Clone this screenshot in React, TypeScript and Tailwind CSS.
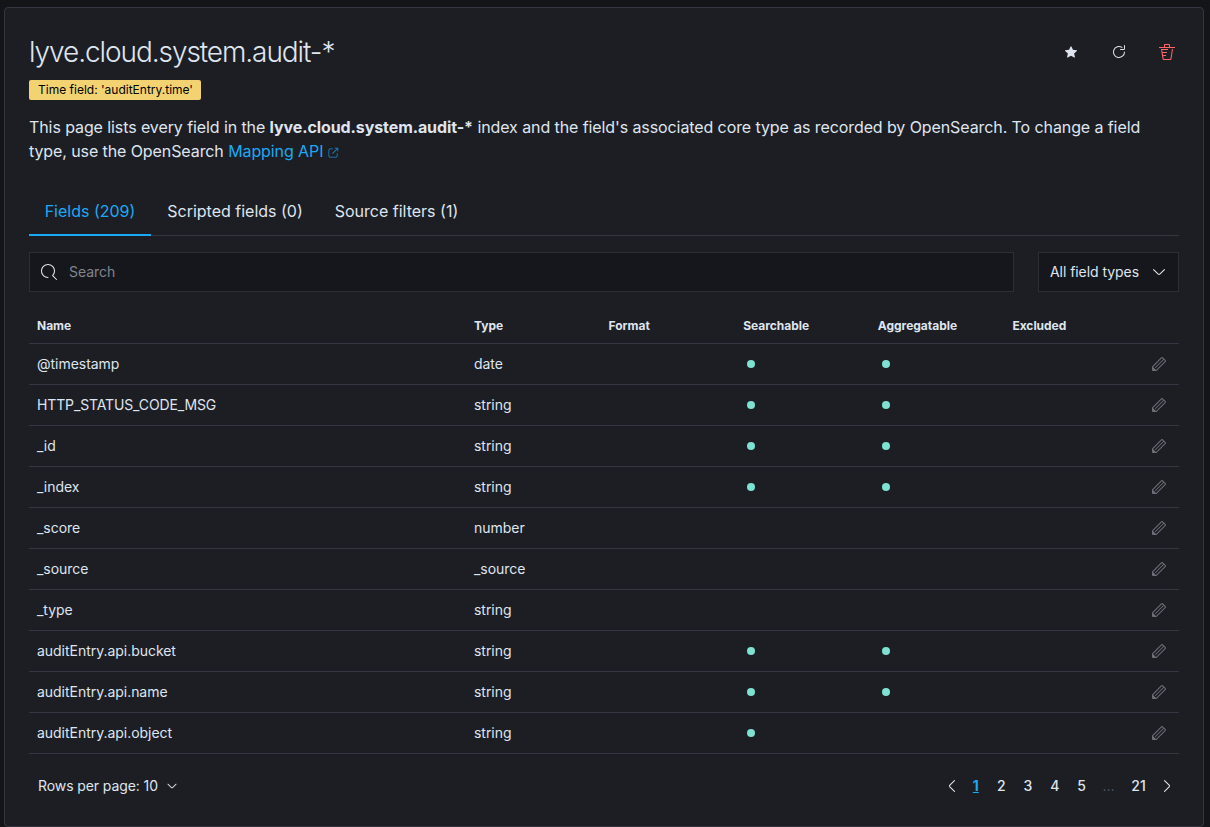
import React from "react";

type IconProps = { d: string; size?: string; className?: string };

function Icon({ d, size = "size-4", className = "" }: IconProps) {
  return (
    <svg viewBox="0 0 16 16" className={`${size} shrink-0 ${className}`} fill="currentColor" fillRule="evenodd" aria-hidden="true">
      <path d={d} />
    </svg>
  );
}

const SEARCH =
  "M11.271 11.978l3.872 3.873a.502.502 0 00.708 0 .502.502 0 000-.708l-3.565-3.564c2.38-2.747 2.267-6.923-.342-9.532-2.73-2.73-7.17-2.73-9.898 0-2.728 2.729-2.728 7.17 0 9.9a6.955 6.955 0 004.949 2.05.5.5 0 000-1 5.96 5.96 0 01-4.242-1.757 6.01 6.01 0 010-8.486 6.004 6.004 0 018.484 0 6.01 6.01 0 010 8.486.5.5 0 00.034.738z";
const ARROW_DOWN =
  "M13.069 5.157L8.384 9.768a.546.546 0 01-.768 0L2.93 5.158a.552.552 0 00-.771 0 .53.53 0 000 .759l4.684 4.61c.641.631 1.672.63 2.312 0l4.684-4.61a.53.53 0 000-.76.552.552 0 00-.771 0z";
const STAR =
  "M7.55 1.6a.5.5 0 01.9 0l1.75 3.85 4.25.5a.5.5 0 01.28.87l-3.15 2.85.87 4.15a.5.5 0 01-.74.54L8 12.2l-3.71 2.16a.5.5 0 01-.74-.54l.87-4.15L1.27 6.82a.5.5 0 01.28-.87l4.25-.5z";
const REFRESH =
  "M11.228 2.942a.5.5 0 11-.538.842A5 5 0 1013 8a.5.5 0 111 0 6 6 0 11-2.772-5.058zM14 1.5v3A1.5 1.5 0 0112.5 6h-3a.5.5 0 010-1h3a.5.5 0 00.5-.5v-3a.5.5 0 111 0z";
const TRASH =
  "M11 3h5v1H0V3h5V1a1 1 0 011-1h4a1 1 0 011 1v2zm-1 0V1H6v2h4zM2 5h7v1H3.15l.31 2H8v1H3.62l.47 2H7v1H4.25l.24 2.52c.04.27.25.46.49.46h6.04c.24 0 .45-.19.49-.46L13 5h1l-1.5 9.67c-.12.75-.74 1.31-1.46 1.31H4.97c-.73 0-1.35-.56-1.47-1.31z";
const POPOUT =
  "M13 8.5a.5.5 0 111 0V12a2 2 0 01-2 2H4a2 2 0 01-2-2V4a2 2 0 012-2h3.5a.5.5 0 010 1H4a1 1 0 00-1 1v8a1 1 0 001 1h8a1 1 0 001-1V8.5zm-5.12.339a.5.5 0 11-.706-.707L13.305 2H10.5a.5.5 0 110-1H14a1 1 0 011 1v3.5a.5.5 0 11-1 0V2.72L7.88 8.838z";
const PENCIL =
  "M12.148 3.148L11 2l-9 9v3h3l9-9-1.144-1.144-8.002 7.998a.502.502 0 01-.708 0 .502.502 0 010-.708l8.002-7.998zM11 1c.256 0 .512.098.707.293l3 3a.999.999 0 010 1.414l-9 9A.997.997 0 015 15H2a1 1 0 01-1-1v-3c0-.265.105-.52.293-.707l9-9A.997.997 0 0111 1zM5 14H2v-3l3 3z";

type Field = { name: string; type: string; searchable?: boolean; aggregatable?: boolean };

const fields: Field[] = [
  { name: "@timestamp", type: "date", searchable: true, aggregatable: true },
  { name: "HTTP_STATUS_CODE_MSG", type: "string", searchable: true, aggregatable: true },
  { name: "_id", type: "string", searchable: true, aggregatable: true },
  { name: "_index", type: "string", searchable: true, aggregatable: true },
  { name: "_score", type: "number" },
  { name: "_source", type: "_source" },
  { name: "_type", type: "string" },
  { name: "auditEntry.api.bucket", type: "string", searchable: true, aggregatable: true },
  { name: "auditEntry.api.name", type: "string", searchable: true, aggregatable: true },
  { name: "auditEntry.api.object", type: "string", searchable: true },
];

const ROW = "grid grid-cols-[437px_134.6px_134.6px_134.6px_134.6px_134.6px_40px] border-b border-[#343741]";

function Dot({ on }: { on?: boolean }) {
  return <div className="flex items-center px-3">{on && <span className="size-2 rounded-full bg-[#7de2d1]" />}</div>;
}

function Header() {
  return (
    <header className="flex justify-between">
      <div>
        <h1 className="h-10 text-[28px] leading-10 font-light tracking-[-1.08px]">lyve.cloud.system.audit-*</h1>
        <div className="mt-2 flex h-5 w-[172px] items-center justify-center rounded-[2px] bg-[#f3d371] pl-px text-xs font-normal whitespace-nowrap text-black">
          Time field: 'auditEntry.time'
        </div>
      </div>
      <div className="flex h-10 w-[120px] items-center justify-between">
        <button className="flex size-6 items-center justify-center" aria-label="Favorite"><Icon d={STAR} size="size-[14px]" /></button>
        <button className="flex size-6 items-center justify-center" aria-label="Refresh"><Icon d={REFRESH} /></button>
        <button className="flex size-6 items-center justify-center text-[#ff6666]" aria-label="Delete"><Icon d={TRASH} /></button>
      </div>
    </header>
  );
}

function Tabs() {
  return (
    <nav className="mt-[25px] flex h-12 border-b border-[#343741] text-base leading-[46px]">
      <button className="h-12 w-[122px] border-b-2 border-[#1ba9f5] text-[#1ba9f5]">Fields (209)</button>
      <button className="h-12 w-[168px] border-b-2 border-transparent">Scripted fields (0)</button>
      <button className="h-12 w-[155px] border-b-2 border-transparent">Source filters (1)</button>
    </nav>
  );
}

function Pagination() {
  return (
    <nav className="flex items-center text-sm font-medium">
      <button className="flex w-6 justify-center" aria-label="Previous"><Icon d={ARROW_DOWN} className="rotate-90" /></button>
      <button className="w-6 font-bold text-[#1ba9f5] underline">1</button>
      {["2", "3", "4", "5"].map((page) => (
        <button key={page} className="w-[26.8px]">{page}</button>
      ))}
      <span className="w-[27px] text-center font-normal text-[#535966]">…</span>
      <button className="w-[33px]">21</button>
      <button className="flex w-6 justify-center" aria-label="Next"><Icon d={ARROW_DOWN} className="-rotate-90" /></button>
    </nav>
  );
}

export default function App() {
  return (
    <div className="h-[827px] overflow-hidden bg-[#141519] pt-[7px] pl-1 font-[Inter,sans-serif] text-[#dfe5ef]">
      <main className="h-[820px] w-[1200px] rounded-[4px] border border-[#343741] bg-[#1d1e24] p-6">
        <Header />
        <p className="mt-[15px] text-base leading-6 tracking-[-0.093px]">
          This page lists every field in the <strong className="font-bold">lyve.cloud.system.audit-*</strong> index and the field's
          associated core type as recorded by OpenSearch. To change a field type, use the OpenSearch{" "}
          <a className="text-[#1ba9f5]">
            Mapping API <Icon d={POPOUT} size="size-3" className="-ml-px inline-block align-[-2px] opacity-80" />
          </a>
        </p>
        <Tabs />
        <div className="mt-4 flex h-10 gap-6 text-sm tracking-[-0.06px]">
          <div className="flex flex-1 items-center border border-[#2c2e36] bg-[#16171c] pl-[11px]">
            <Icon d={SEARCH} />
            <span className="ml-3 text-[#81858f]">Search</span>
          </div>
          <button className="flex w-[141px] items-center justify-between border border-[#2c2e36] bg-[#16171c] px-[11px]">
            All field types
            <Icon d={ARROW_DOWN} />
          </button>
        </div>
        <section className="mt-4 text-sm">
          <div className={`${ROW} h-9 items-center text-xs font-bold tracking-[-0.02px]`}>
            {["Name", "Type", "Format", "Searchable", "Aggregatable", "Excluded"].map((label) => (
              <div key={label} className="px-2">{label}</div>
            ))}
          </div>
          {fields.map((field) => (
            <div key={field.name} className={`${ROW} h-[41px] items-center tracking-[-0.03px]`}>
              <div className={field.name.startsWith("HTTP") ? "px-2 tracking-[-0.13px]" : "px-2"}>{field.name}</div>
              <div className="px-2">{field.type}</div>
              <div />
              <Dot on={field.searchable} />
              <Dot on={field.aggregatable} />
              <div />
              <button className="flex items-center justify-center text-[#6c6f77]" aria-label="Edit"><Icon d={PENCIL} /></button>
            </div>
          ))}
        </section>
        <footer className="mt-5 flex h-6 items-center justify-between">
          <button className="flex items-center gap-2 pl-[9px] text-sm tracking-[-0.09px]">
            Rows per page: 10
            <Icon d={ARROW_DOWN} size="size-3" />
          </button>
          <Pagination />
        </footer>
      </main>
    </div>
  );
}
